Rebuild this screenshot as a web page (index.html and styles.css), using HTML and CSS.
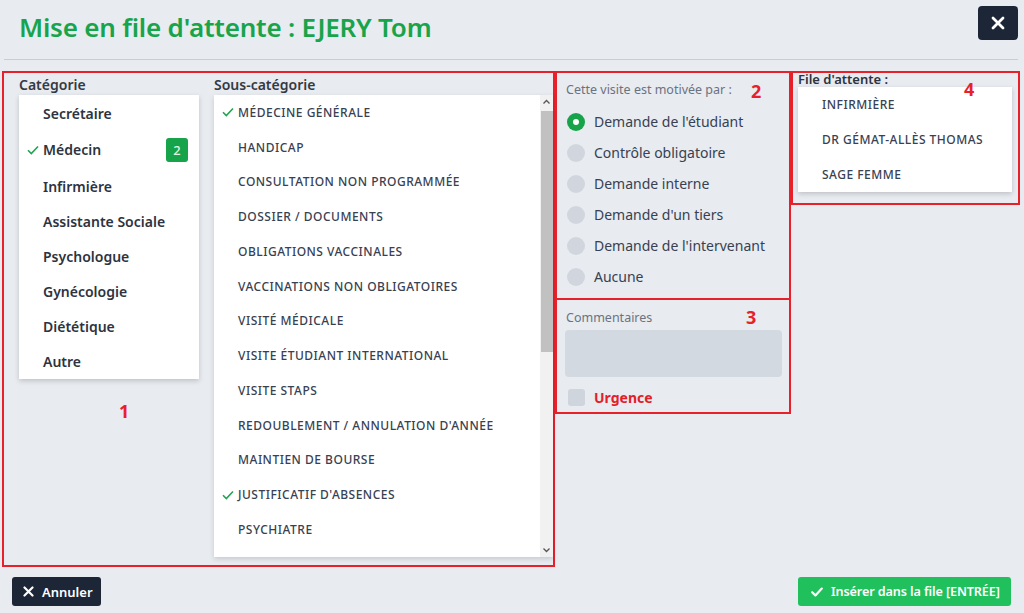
FILE: index.html
```html
<!DOCTYPE html>
<html lang="fr">
<head>
<meta charset="utf-8">
<title>Mise en file d'attente</title>
<link rel="stylesheet" href="styles.css">
</head>
<body>
<div class="page">
  <header class="header">
    <h1 class="title">Mise en file d'attente : EJERY Tom</h1>
    <button class="close" aria-label="Fermer">
      <svg width="14" height="14" viewBox="0 0 14 14"><path d="M2 2 L12 12 M12 2 L2 12" stroke="#fff" stroke-width="2.8" stroke-linecap="round"/></svg>
    </button>
  </header>

  <main class="main">
    <section class="box box1">
      <div class="cat-col">
        <div class="label">Catégorie</div>
        <ul class="cat-list">
          <li class="cat-item">Secrétaire</li>
          <li class="cat-item selected">
            <svg class="check" width="12" height="10" viewBox="0 0 12 10"><path d="M1 5.2 L4.3 8.5 L11 1.5" fill="none" stroke="#22a352" stroke-width="1.6"/></svg>
            <span class="cat-name">Médecin</span>
            <span class="badge">2</span>
          </li>
          <li class="cat-item">Infirmière</li>
          <li class="cat-item">Assistante Sociale</li>
          <li class="cat-item">Psychologue</li>
          <li class="cat-item">Gynécologie</li>
          <li class="cat-item">Diététique</li>
          <li class="cat-item">Autre</li>
        </ul>
        <div class="num num1">1</div>
      </div>
      <div class="sub-col">
        <div class="label">Sous-catégorie</div>
        <div class="sub-list">
          <ul class="sub-items">
            <li class="sub-item"><svg class="check" width="12" height="10" viewBox="0 0 12 10"><path d="M1 5.2 L4.3 8.5 L11 1.5" fill="none" stroke="#22a352" stroke-width="1.6"/></svg>MÉDECINE GÉNÉRALE</li>
            <li class="sub-item">HANDICAP</li>
            <li class="sub-item">CONSULTATION NON PROGRAMMÉE</li>
            <li class="sub-item">DOSSIER / DOCUMENTS</li>
            <li class="sub-item">OBLIGATIONS VACCINALES</li>
            <li class="sub-item">VACCINATIONS NON OBLIGATOIRES</li>
            <li class="sub-item">VISITÉ MÉDICALE</li>
            <li class="sub-item">VISITE ÉTUDIANT INTERNATIONAL</li>
            <li class="sub-item">VISITE STAPS</li>
            <li class="sub-item">REDOUBLEMENT / ANNULATION D'ANNÉE</li>
            <li class="sub-item">MAINTIEN DE BOURSE</li>
            <li class="sub-item"><svg class="check" width="12" height="10" viewBox="0 0 12 10"><path d="M1 5.2 L4.3 8.5 L11 1.5" fill="none" stroke="#22a352" stroke-width="1.6"/></svg>JUSTIFICATIF D'ABSENCES</li>
            <li class="sub-item">PSYCHIATRE</li>
            <li class="sub-item">PSYCHOLOGUE</li>
          </ul>
          <div class="scrollbar">
            <svg class="arrow" width="13" height="14" viewBox="0 0 13 14"><path d="M3.5 8.5 L6.5 5.5 L9.5 8.5" fill="none" stroke="#555" stroke-width="1.3"/></svg>
            <div class="track"><div class="thumb"></div></div>
            <svg class="arrow" width="13" height="14" viewBox="0 0 13 14"><path d="M3.5 5.5 L6.5 8.5 L9.5 5.5" fill="none" stroke="#555" stroke-width="1.3"/></svg>
          </div>
        </div>
      </div>
    </section>

    <div class="col-mid">
      <section class="box box2">
        <div class="small-label">Cette visite est motivée par :</div>
        <div class="num num2">2</div>
        <ul class="radios">
          <li class="radio-row"><span class="radio on"></span>Demande de l'étudiant</li>
          <li class="radio-row"><span class="radio"></span>Contrôle obligatoire</li>
          <li class="radio-row"><span class="radio"></span>Demande interne</li>
          <li class="radio-row"><span class="radio"></span>Demande d'un tiers</li>
          <li class="radio-row"><span class="radio"></span>Demande de l'intervenant</li>
          <li class="radio-row"><span class="radio"></span>Aucune</li>
        </ul>
      </section>
      <section class="box box3">
        <div class="small-label">Commentaires</div>
        <div class="num num3">3</div>
        <div class="textarea"></div>
        <div class="urgent-row"><span class="checkbox"></span><span class="urgent">Urgence</span></div>
      </section>
    </div>

    <section class="box box4">
      <div class="queue-label">File d'attente :</div>
      <div class="num num4">4</div>
      <ul class="queue-list">
        <li class="queue-item">INFIRMIÈRE</li>
        <li class="queue-item">DR GÉMAT-ALLÈS THOMAS</li>
        <li class="queue-item">SAGE FEMME</li>
      </ul>
    </section>
  </main>

  <footer class="footer">
    <button class="btn btn-dark">
      <svg width="11" height="11" viewBox="0 0 11 11"><path d="M1.5 1.5 L9.5 9.5 M9.5 1.5 L1.5 9.5" stroke="#fff" stroke-width="2.2" stroke-linecap="round"/></svg>
      Annuler
    </button>
    <button class="btn btn-green">
      <svg width="12" height="10" viewBox="0 0 12 10"><path d="M1.2 5.2 L4.4 8.4 L10.8 1.6" fill="none" stroke="#fff" stroke-width="2.2" stroke-linecap="round" stroke-linejoin="round"/></svg>
      Insérer dans la file [ENTRÉE]
    </button>
  </footer>
</div>
</body>
</html>
```

FILE: styles.css
```css
* { box-sizing: border-box; }
html, body { margin: 0; padding: 0; }
body {
  background: #e8ebf0;
  font-family: "Noto Sans", "Open Sans", sans-serif;
  color: #2d3340;
  width: 1024px;
  height: 613px;
  overflow: hidden;
}
ul { list-style: none; margin: 0; padding: 0; }
button { font-family: inherit; border: 0; cursor: pointer; }

.page { display: flex; flex-direction: column; height: 613px; }

/* header */
.header {
  height: 60px;
  margin: 0 6px 0 4px;
  border-bottom: 1px solid #c9ced6;
  display: flex;
  align-items: flex-start;
  justify-content: space-between;
}
.title {
  margin: 10px 0 0 15px;
  font-size: 26px;
  line-height: 34px;
  font-weight: 600;
  color: #17a44b;
  letter-spacing: -0.2px;
}
.close {
  margin-top: 6px;
  width: 40px;
  height: 34px;
  border-radius: 4px;
  background: #1c2637;
  display: flex;
  align-items: center;
  justify-content: center;
}

/* main */
.main {
  display: flex;
  align-items: flex-start;
  margin: 11px 0 0 2px;
}
.box {
  border: 2px solid #e8202a;
  position: relative;
}
.box1 {
  width: 553px;
  height: 496px;
  display: flex;
  gap: 15px;
  padding-left: 15px;
}
.label {
  font-size: 14px;
  line-height: 20px;
  font-weight: 600;
  color: #333a44;
  margin-top: 2px;
}
.cat-col { width: 180px; display: flex; flex-direction: column; }
.cat-list {
  background: #fff;
  box-shadow: 0 2px 5px rgba(0,0,0,.18);
  padding-top: 1px;
}
.cat-item {
  height: 35px;
  display: flex;
  align-items: center;
  padding-left: 24px;
  font-size: 14px;
  font-weight: 600;
  color: #2d3340;
}
.cat-item:first-child { height: 34px; }
.cat-item.selected { padding-left: 8px; height: 39px; }
.cat-item .check { margin-right: 4px; }
.cat-name { flex: 1; }
.badge {
  width: 22px;
  height: 24px;
  margin-right: 11px;
  border-radius: 3px;
  background: #16a34a;
  color: #dcf7e6;
  font-weight: 500;
  font-size: 13px;
  display: flex;
  align-items: center;
  justify-content: center;
}
.num {
  color: #e8202a;
  font-weight: 700;
  font-size: 18px;
  line-height: 20px;
}
.num1 { margin: 22px 0 0 100px; }
.num2, .num3, .num4 { position: absolute; }
.num2 { left: 194px; top: 8px; }
.num3 { left: 189px; top: 7px; }
.num4 { left: 171px; top: 6px; }

.sub-col { width: 339px; display: flex; flex-direction: column; }
.sub-list {
  height: 462px;
  background: #fff;
  display: flex;
  box-shadow: 0 2px 5px rgba(0,0,0,.15);
}
.sub-items { flex: 1; overflow: hidden; }
.sub-item {
  height: 34.75px;
  display: flex;
  align-items: center;
  padding-left: 24px;
  font-size: 12px;
  font-weight: 500;
  letter-spacing: 0.5px;
  color: #374151;
  white-space: nowrap;
}
.sub-item .check { margin-left: -16px; margin-right: 4px; }
.scrollbar {
  width: 13px;
  display: flex;
  flex-direction: column;
  background: #f1f1f1;
}
.arrow { flex: none; display: block; }
.track { flex: 1; padding: 2px 0 0 1px; }
.thumb { height: 241px; background: #c1c1c1; }

.col-mid { width: 236px; display: flex; flex-direction: column; }
.box2 { height: 229px; padding: 7px 0 0 9px; }
.small-label {
  font-size: 12.5px;
  line-height: 20px;
  color: #6b7280;
}
.radios { margin-top: 6px; }
.radio-row {
  height: 31px;
  display: flex;
  align-items: center;
  font-size: 14px;
  color: #374151;
}
.radio {
  width: 18px;
  height: 18px;
  border-radius: 50%;
  background: #d1d6de;
  margin: 0 9px 0 1px;
  flex: none;
}
.radio.on {
  background: #16a34a;
  display: flex;
  align-items: center;
  justify-content: center;
}
.radio.on::after {
  content: "";
  width: 6px;
  height: 6px;
  border-radius: 50%;
  background: #fff;
}
.box3 { height: 114px; border-top: 0; padding: 8px 0 0 9px; }
.textarea {
  width: 217px;
  height: 47px;
  margin: 2px 0 0 -1px;
  background: #d3d9e0;
  border-radius: 4px;
}
.urgent-row { display: flex; align-items: center; margin-top: 11px; }
.checkbox {
  width: 17px;
  height: 17px;
  border-radius: 3px;
  background: #cfd5dd;
  margin: 0 9px 0 2px;
}
.urgent { color: #e3202a; font-weight: 700; font-size: 14px; }

.box4 { width: 229px; height: 134px; padding: 0 0 0 5px; }
.queue-label {
  font-size: 13px;
  line-height: 16px;
  font-weight: 600;
  color: #2d3340;
  margin-top: -2px;
  position: relative;
  z-index: -1;
}
.queue-list {
  width: 214px;
  margin-top: 0;
  background: #fff;
  box-shadow: 0 2px 5px rgba(0,0,0,.18);
}
.queue-item {
  height: 35px;
  display: flex;
  align-items: center;
  padding-left: 24px;
  font-size: 12px;
  font-weight: 500;
  letter-spacing: 0.5px;
  color: #374151;
}

/* footer */
.footer {
  display: flex;
  justify-content: space-between;
  padding: 10px 13px 0 12px;
}
.btn {
  height: 29px;
  border-radius: 3px;
  display: flex;
  align-items: center;
  gap: 8px;
  color: #fff;
  font-size: 13px;
  font-weight: 600;
  white-space: nowrap;
}
.btn-dark { width: 89px; background: #1c2637; padding-left: 11px; }
.btn-green { width: 213px; background: #20c15c; padding-left: 13px; font-size: 12.6px; letter-spacing: -0.1px; }
```
